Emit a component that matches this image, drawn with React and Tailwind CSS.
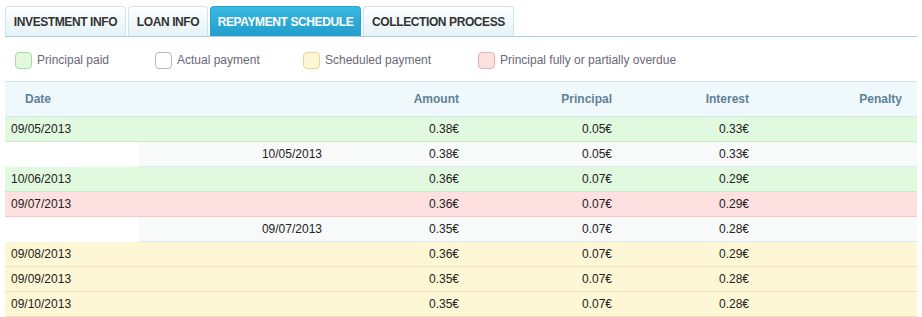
import React from "react";

const tabs = [
  { label: "INVESTMENT INFO", active: false, w: "w-[121px]" },
  { label: "LOAN INFO", active: false, w: "w-[80px]" },
  { label: "REPAYMENT SCHEDULE", active: true, w: "w-[151px]" },
  { label: "COLLECTION PROCESS", active: false, w: "w-[151px]" },
];

const legend = [
  { label: "Principal paid", box: "bg-[#e2f9df] border-[#a8dba2]", w: "w-[140px]" },
  { label: "Actual payment", box: "bg-white border-[#b9b9b9]", w: "w-[148px]" },
  { label: "Scheduled payment", box: "bg-[#fef7d5] border-[#efd493]", w: "w-[175px]" },
  { label: "Principal fully or partially overdue", box: "bg-[#fde0e0] border-[#e8adad]", w: "w-[220px]" },
];

const rows = [
  { type: "paid", date: "09/05/2013", amount: "0.38€", principal: "0.05€", interest: "0.33€" },
  { type: "actual", date: "10/05/2013", amount: "0.38€", principal: "0.05€", interest: "0.33€" },
  { type: "paid", date: "10/06/2013", amount: "0.36€", principal: "0.07€", interest: "0.29€" },
  { type: "overdue", date: "09/07/2013", amount: "0.36€", principal: "0.07€", interest: "0.29€" },
  { type: "actual", date: "09/07/2013", amount: "0.35€", principal: "0.07€", interest: "0.28€" },
  { type: "sched", date: "09/08/2013", amount: "0.36€", principal: "0.07€", interest: "0.29€" },
  { type: "sched", date: "09/09/2013", amount: "0.35€", principal: "0.07€", interest: "0.28€" },
  { type: "sched", date: "09/10/2013", amount: "0.35€", principal: "0.07€", interest: "0.28€" },
];

const rowStyle = {
  paid: "bg-[#e1f9df] border-b border-[#cbebc7]",
  overdue: "bg-[#fee0e0] border-b border-[#f5c6c6]",
  sched: "bg-[#fef7d6] border-b border-[#f5e0bd]",
};

const grid = "grid grid-cols-[134px_191px_137px_153px_137px_1fr]";

function Row({ r }) {
  if (r.type === "actual") {
    return (
      <div className={`${grid} h-[25px] text-[12px] text-[#222]`}>
        <div className="bg-white" />
        <div className="col-span-5 grid grid-cols-[191px_137px_153px_137px_1fr] bg-[#f8f9f9] border-b border-[#dbeaf2] items-center">
          <div className="text-right pr-[8px]">{r.date}</div>
          <div className="text-right pr-[8px]">{r.amount}</div>
          <div className="text-right pr-[8px]">{r.principal}</div>
          <div className="text-right pr-[8px]">{r.interest}</div>
          <div />
        </div>
      </div>
    );
  }
  return (
    <div className={`${grid} h-[25px] items-center text-[12px] text-[#222] ${rowStyle[r.type]}`}>
      <div className="pl-[6px]">{r.date}</div>
      <div />
      <div className="text-right pr-[8px]">{r.amount}</div>
      <div className="text-right pr-[8px]">{r.principal}</div>
      <div className="text-right pr-[8px]">{r.interest}</div>
      <div />
    </div>
  );
}

export default function App() {
  return (
    <div
      className="w-[922px] h-[317px] bg-white overflow-hidden"
      style={{ fontFamily: '"Liberation Sans", Arial, sans-serif' }}
    >
      <div className="mx-[5px] pt-[6px]">
        <div className="flex gap-[2px] border-b border-[#a9d3e3] h-[31px]">
          {tabs.map((t) => (
            <div
              key={t.label}
              className={
                t.active
                  ? `${t.w} flex-none h-[30px] flex items-center justify-center whitespace-nowrap rounded-t-[4px] border border-b-0 border-[#26a5d1] bg-gradient-to-b from-[#3ab9e1] to-[#219dca] text-white font-bold text-[12px] tracking-[-0.4px]`
                  : `${t.w} flex-none h-[30px] flex items-center justify-center whitespace-nowrap rounded-t-[4px] border border-b-0 border-[#cfe4ec] bg-gradient-to-b from-[#ffffff] to-[#e4f2f7] text-[#333] font-bold text-[12px] tracking-[-0.4px]`
              }
            >
              {t.label}
            </div>
          ))}
        </div>

        <div className="flex items-center pl-[10px] pt-[15px] pb-[12px]">
          {legend.map((l) => (
            <div key={l.label} className={`${l.w} flex-none flex items-center gap-[5px]`}>
              <div className={`w-[17px] h-[17px] flex-none rounded-[4px] border ${l.box}`} />
              <span className="text-[12px] text-[#6a6878] leading-[17px] whitespace-nowrap">{l.label}</span>
            </div>
          ))}
        </div>

        <div className={`${grid} h-[36px] items-center bg-[#eff8fb] border-t border-b border-[#d2e7f0] text-[12px] font-bold text-[#5f8196]`}>
          <div className="pl-[20px]">Date</div>
          <div />
          <div className="text-right pr-[8px]">Amount</div>
          <div className="text-right pr-[8px]">Principal</div>
          <div className="text-right pr-[8px]">Interest</div>
          <div className="text-right pr-[15px]">Penalty</div>
        </div>

        {rows.map((r, i) => (
          <Row key={i} r={r} />
        ))}
      </div>
    </div>
  );
}
